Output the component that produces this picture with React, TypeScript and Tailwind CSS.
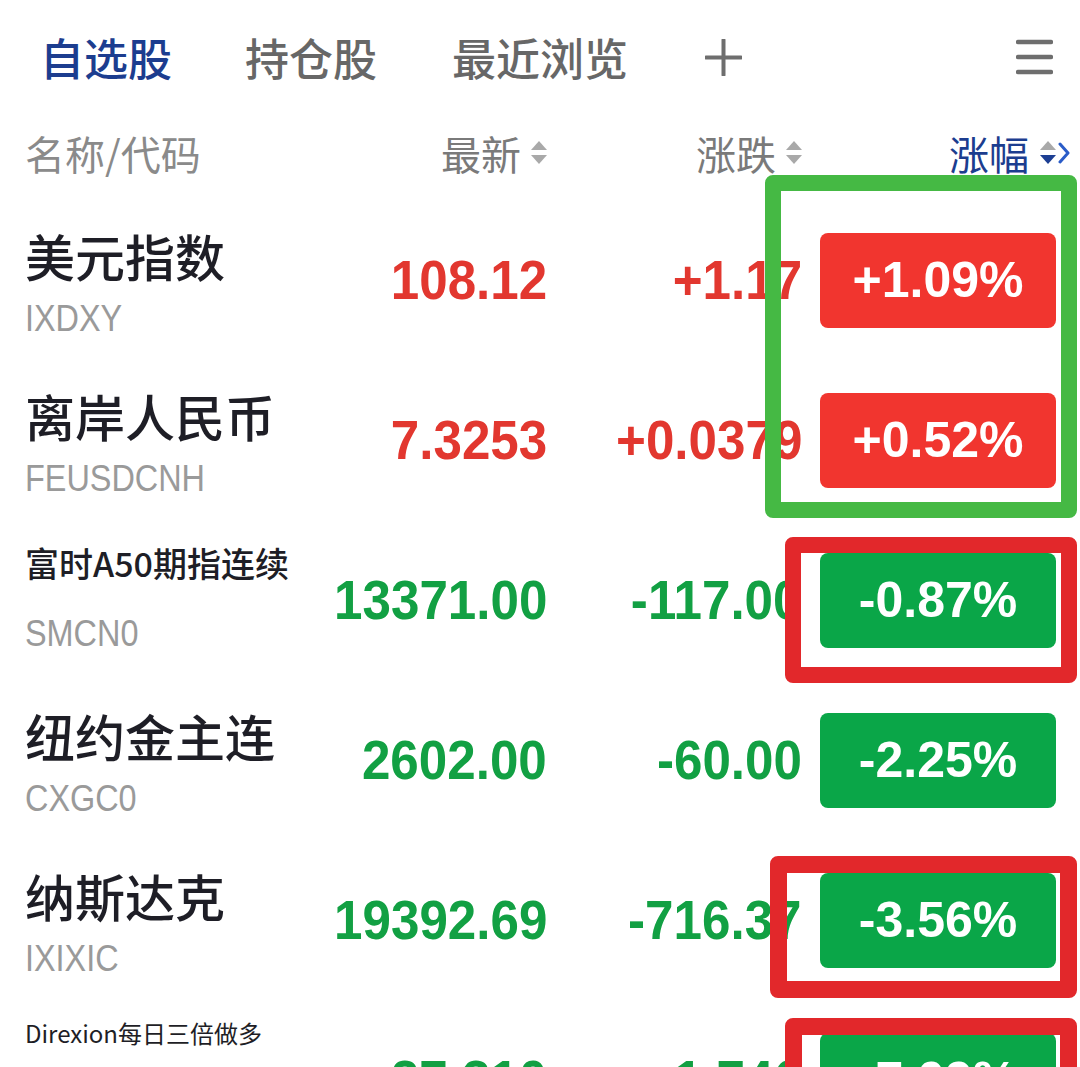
import React from "react";

type Row = {
  name: string;
  code: string;
  last: string;
  chg: string;
  pct: string;
  up: boolean;
  kind: "big" | "small" | "tiny";
};

const rows: Row[] = [
  { name: "美元指数", code: "IXDXY", last: "108.12", chg: "+1.17", pct: "+1.09%", up: true, kind: "big" },
  { name: "离岸人民币", code: "FEUSDCNH", last: "7.3253", chg: "+0.0379", pct: "+0.52%", up: true, kind: "big" },
  { name: "富时A50期指连续", code: "SMCN0", last: "13371.00", chg: "-117.00", pct: "-0.87%", up: false, kind: "small" },
  { name: "纽约金主连", code: "CXGC0", last: "2602.00", chg: "-60.00", pct: "-2.25%", up: false, kind: "big" },
  { name: "纳斯达克", code: "IXIXIC", last: "19392.69", chg: "-716.37", pct: "-3.56%", up: false, kind: "big" },
  { name: "Direxion每日三倍做多", code: "SOXL", last: "27.310", chg: "-1.746", pct: "-7.09%", up: false, kind: "tiny" },
];

const CJK = "font-['Noto_Sans_CJK_SC','Noto_Sans',sans-serif]";
const NUM = "font-['Liberation_Sans','Arial',sans-serif]";

function SortArrows({ active = false }: { active?: boolean }) {
  return (
    <svg width="16" height="26" viewBox="0 0 16 26" className="shrink-0">
      <polygon points="0,10 8,1 16,10" fill="#a9a9a9" />
      <polygon points="0,15 16,15 8,24" fill={active ? "#1d3f93" : "#a9a9a9"} />
    </svg>
  );
}

function Code({ text }: { text: string }) {
  return (
    <span className={`${NUM} inline-block origin-left scale-x-[0.9] text-[36px] leading-none text-[#9a9a9a] whitespace-nowrap`}>
      {text}
    </span>
  );
}

function RowView({ r }: { r: Row }) {
  const valColor = r.up ? "text-[#e2372f]" : "text-[#12a043]";
  const badge = r.up ? "bg-[#f1352f]" : "bg-[#0aa648]";
  return (
    <div className="h-[160px] flex items-center pl-[25px] shrink-0">
      <div className="w-[302px] self-stretch flex flex-col">
        {r.kind === "big" && (
          <>
            <div className={`${CJK} pt-[30px] text-[50px] leading-none font-medium text-[#1e1e26] whitespace-nowrap`}>
              {r.name}
            </div>
            <div className="mt-[21px]">
              <Code text={r.code} />
            </div>
          </>
        )}
        {r.kind === "small" && (
          <>
            <div className={`${CJK} pt-[26px] text-[34px] leading-none font-medium text-[#1e1e26] whitespace-nowrap`}>
              {r.name}
            </div>
            <div className="mt-[36px]">
              <Code text={r.code} />
            </div>
          </>
        )}
        {r.kind === "tiny" && (
          <div className={`${CJK} pt-[21px] text-[24px] leading-none text-[#1e1e26] whitespace-nowrap`}>
            {r.name}
          </div>
        )}
      </div>
      <div className="w-[220px] flex justify-end">
        <span className={`${NUM} inline-block origin-right scale-x-[0.93] text-[55px] leading-none font-bold ${valColor} whitespace-nowrap`}>
          {r.last}
        </span>
      </div>
      <div className="w-[255px] flex justify-end">
        <span className={`${NUM} inline-block origin-right scale-x-[0.93] text-[55px] leading-none font-bold ${valColor} whitespace-nowrap`}>
          {r.chg}
        </span>
      </div>
      <div className={`ml-[18px] w-[236px] h-[95px] rounded-[8px] ${badge} flex items-center justify-center shrink-0`}>
        <span className={`${NUM} inline-block text-[50px] leading-none font-bold text-white whitespace-nowrap`}>
          {r.pct}
        </span>
      </div>
    </div>
  );
}

export default function App() {
  return (
    <div className="relative w-[1080px] h-[1067px] overflow-hidden bg-white">
      {/* Tabs */}
      <div className="h-[116px] flex items-center pl-[40px] pr-[27px] pb-[2px]">
        <div className={`${CJK} text-[44px] leading-none font-medium text-[#1c3d8f] whitespace-nowrap`}>自选股</div>
        <div className={`${CJK} ml-[73px] text-[44px] leading-none font-medium text-[#676767] whitespace-nowrap`}>持仓股</div>
        <div className={`${CJK} ml-[75px] text-[44px] leading-none font-medium text-[#676767] whitespace-nowrap`}>最近浏览</div>
        <svg width="37" height="37" viewBox="0 0 37 37" className="ml-[77px] shrink-0">
          <line x1="18.5" y1="1" x2="18.5" y2="36" stroke="#6e6e6e" strokeWidth="4" strokeLinecap="round" />
          <line x1="1" y1="18.5" x2="36" y2="18.5" stroke="#6e6e6e" strokeWidth="4" strokeLinecap="round" />
        </svg>
        <svg width="37" height="36" viewBox="0 0 37 36" className="ml-auto shrink-0">
          <line x1="2" y1="3" x2="35" y2="3" stroke="#6e6e6e" strokeWidth="4.5" strokeLinecap="round" />
          <line x1="2" y1="18" x2="35" y2="18" stroke="#6e6e6e" strokeWidth="4.5" strokeLinecap="round" />
          <line x1="2" y1="33" x2="35" y2="33" stroke="#6e6e6e" strokeWidth="4.5" strokeLinecap="round" />
        </svg>
      </div>

      {/* Column header */}
      <div className="h-[84px] flex items-center pl-[25px] pb-[11px]">
        <div className={`${CJK} w-[302px] text-[40px] leading-none text-[#8a8a8a] whitespace-nowrap`}>名称/代码</div>
        <div className="w-[220px] flex items-center justify-end gap-[10px]">
          <span className={`${CJK} text-[40px] leading-none text-[#7a7a7a] whitespace-nowrap`}>最新</span>
          <SortArrows />
        </div>
        <div className="w-[255px] flex items-center justify-end gap-[10px]">
          <span className={`${CJK} text-[40px] leading-none text-[#7a7a7a] whitespace-nowrap`}>涨跌</span>
          <SortArrows />
        </div>
        <div className="w-[268px] flex items-center justify-end">
          <span className={`${CJK} text-[40px] leading-none text-[#1c3d8f] whitespace-nowrap`}>涨幅</span>
          <span className="ml-[11px] flex">
            <SortArrows active />
          </span>
          <svg width="12" height="22" viewBox="0 0 12 22" className="ml-[2px] shrink-0">
            <polyline points="2,2 10,11 2,20" fill="none" stroke="#2a5cc8" strokeWidth="3" strokeLinejoin="round" strokeLinecap="round" />
          </svg>
        </div>
      </div>

      {/* Rows */}
      <div className="flex flex-col">
        {rows.map((r) => (
          <RowView key={r.code} r={r} />
        ))}
      </div>

      {/* Annotation boxes */}
      <div className="absolute left-[765px] top-[175px] w-[312px] h-[343px] border-[16px] border-[#45b944] rounded-[8px]" />
      <div className="absolute left-[785px] top-[537px] w-[292px] h-[146px] border-[16px] border-[#e2282b] rounded-[8px]" />
      <div className="absolute left-[770px] top-[856px] w-[307px] h-[142px] border-[17px] border-[#e2282b] rounded-[8px]" />
      <div className="absolute left-[785px] top-[1018px] w-[292px] h-[140px] border-[17px] border-[#e2282b] rounded-[8px]" />
    </div>
  );
}
